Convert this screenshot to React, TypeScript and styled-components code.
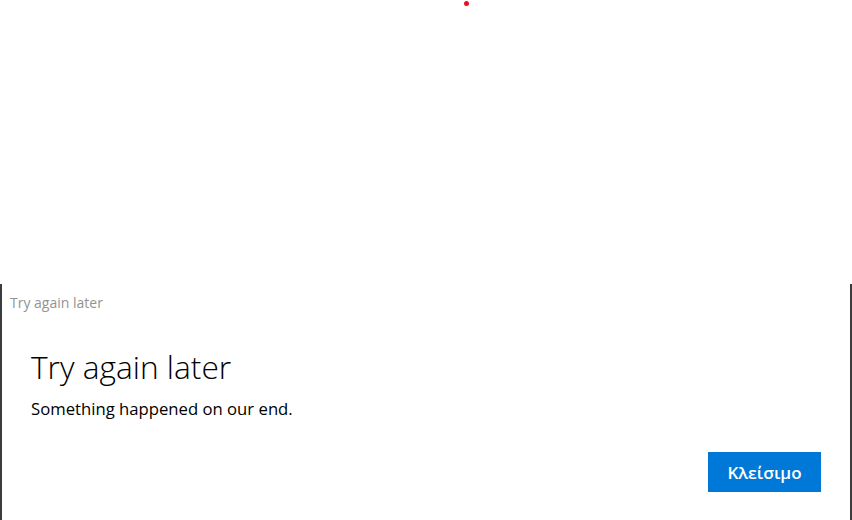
import styled, { createGlobalStyle } from 'styled-components'

const GlobalStyle = createGlobalStyle`
    html, body {
        margin: 0;
        padding: 0;
        background: #ffffff;
        font-family: "Segoe UI", "Open Sans", "Noto Sans", sans-serif;
    }
`

const App = () => {
    return (
        <>
            <GlobalStyle />
            <Page>
                <LoadingArea>
                    <ProgressDot />
                </LoadingArea>
                <Dialog>
                    <WindowTitle>Try again later</WindowTitle>
                    <Content>
                        <Heading>Try again later</Heading>
                        <Message>Something happened on our end.</Message>
                    </Content>
                    <Footer>
                        <PrimaryButton>Κλείσιμο</PrimaryButton>
                    </Footer>
                </Dialog>
            </Page>
        </>
    )
}
export default App;


const Page = styled.div`
    display: flex;
    flex-direction: column;
    width: 852px;
    height: 520px;
    overflow: hidden;
`
const LoadingArea = styled.div`
    position: relative;
    height: 284px;
    flex-shrink: 0;
`
const ProgressDot = styled.div`
    position: absolute;
    left: 464px;
    top: 1px;
    width: 5px;
    height: 5px;
    border-radius: 50%;
    background-color: #e81123;
`
const Dialog = styled.div`
    display: flex;
    flex-direction: column;
    flex: 1;
    border-left: 2px solid #3c3c3c;
    border-right: 2px solid #3c3c3c;
    box-sizing: border-box;
`
const WindowTitle = styled.div`
    padding: 9px 0 0 8px;
    height: 30px;
    box-sizing: border-box;
    font-size: 14px;
    line-height: 20px;
    color: #939393;
`
const Content = styled.div`
    display: flex;
    flex-direction: column;
    padding: 33px 0 0 29px;
`
const Heading = styled.h1`
    margin: 0;
    font-size: 31.7px;
    font-weight: 300;
    line-height: 40px;
    color: #000000;
`
const Message = styled.p`
    margin: 10px 0 0;
    font-size: 16.7px;
    line-height: 24px;
    color: #000000;
`
const Footer = styled.div`
    display: flex;
    justify-content: flex-end;
    padding: 31px 29px 0 0;
`
const PrimaryButton = styled.button`
    width: 113px;
    height: 40px;
    border: none;
    background-color: #0078d7;
    color: #ffffff;
    font-family: inherit;
    font-size: 17px;
    font-weight: 600;
    cursor: pointer;
`
